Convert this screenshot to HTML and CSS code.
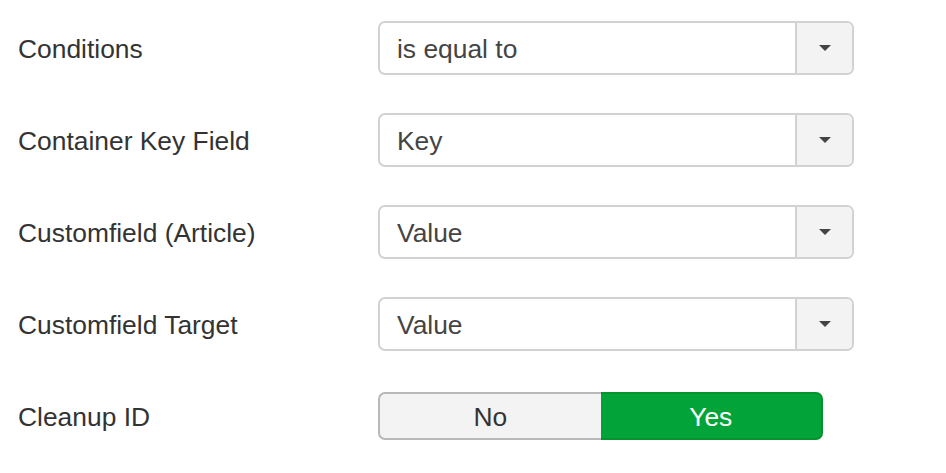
FILE: index.html
```html
<!DOCTYPE html>
<html>
<head>
<meta charset="utf-8">
<link rel="stylesheet" href="styles.css">
</head>
<body>
<div class="form">
  <div class="row">
    <div class="label">Conditions</div>
    <div class="select"><span class="value">is equal to</span><span class="btn"><span class="caret"></span></span></div>
  </div>
  <div class="row">
    <div class="label">Container Key Field</div>
    <div class="select"><span class="value">Key</span><span class="btn"><span class="caret"></span></span></div>
  </div>
  <div class="row">
    <div class="label">Customfield (Article)</div>
    <div class="select"><span class="value">Value</span><span class="btn"><span class="caret"></span></span></div>
  </div>
  <div class="row">
    <div class="label">Customfield Target</div>
    <div class="select"><span class="value">Value</span><span class="btn"><span class="caret"></span></span></div>
  </div>
  <div class="row">
    <div class="label">Cleanup ID</div>
    <div class="toggle"><span class="opt no">No</span><span class="opt yes">Yes</span></div>
  </div>
</div>
</body>
</html>
```
FILE: styles.css
```css
html, body {
  margin: 0;
  padding: 0;
  background: #fff;
}
body {
  font-family: "Liberation Sans", Arial, sans-serif;
  font-size: 26.4px;
  color: #333;
}
.form {
  display: flex;
  flex-direction: column;
  gap: 38px;
  padding: 21px 0 0 18px;
}
.row {
  display: flex;
  align-items: center;
  height: 54px;
}
.label {
  width: 360px;
  flex: none;
  color: #333;
  padding-top: 2px;
}
.select {
  box-sizing: border-box;
  width: 476px;
  height: 54px;
  border: 2px solid #d2d2d2;
  border-radius: 7px;
  display: flex;
  align-items: stretch;
  background: #fff;
  overflow: hidden;
}
.value {
  flex: 1;
  display: flex;
  align-items: center;
  padding-left: 17px;
  padding-top: 2px;
  color: #444;
}
.btn {
  width: 55px;
  flex: none;
  border-left: 2px solid #d2d2d2;
  background: #f3f3f3;
  display: flex;
  align-items: center;
  justify-content: center;
}
.caret {
  width: 0;
  height: 0;
  border-left: 6px solid transparent;
  border-right: 6px solid transparent;
  border-top: 6px solid #444;
}
.toggle {
  display: flex;
  height: 48px;
  width: 445px;
  box-sizing: border-box;
}
.opt {
  flex: 1;
  display: flex;
  align-items: center;
  justify-content: center;
  box-sizing: border-box;
  padding-top: 2px;
}
.no {
  background: #f3f3f3;
  border: 2px solid #b8b8b8;
  border-right: none;
  border-radius: 7px 0 0 7px;
  color: #333;
}
.yes {
  background: #02a43a;
  border: 2px solid #05922f;
  border-left: none;
  border-radius: 0 7px 7px 0;
  color: #fff;
}
```
